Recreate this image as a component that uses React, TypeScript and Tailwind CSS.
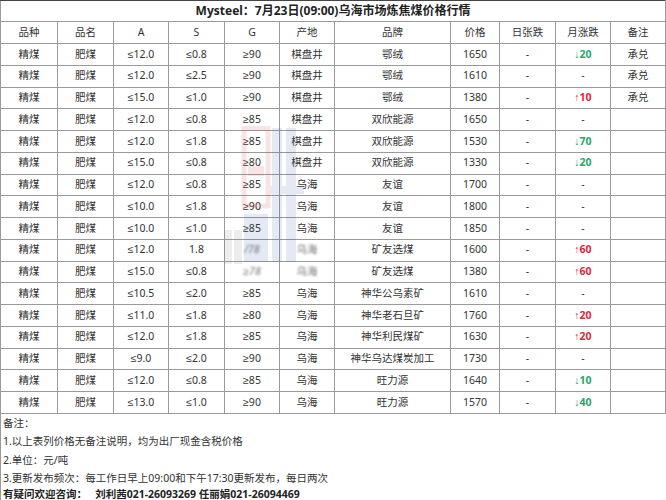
import React from "react";

type Row = {
  a: string;
  s: string;
  g: string;
  origin: string;
  brand: string;
  price: string;
  month: string;
  note?: string;
  blurred?: boolean;
};

const ROWS: Row[] = [
  { a: "≤12.0", s: "≤0.8", g: "≥90", origin: "棋盘井", brand: "鄂绒", price: "1650", month: "↓20", note: "承兑" },
  { a: "≤12.0", s: "≤2.5", g: "≥90", origin: "棋盘井", brand: "鄂绒", price: "1610", month: "-", note: "承兑" },
  { a: "≤15.0", s: "≤1.0", g: "≥90", origin: "棋盘井", brand: "鄂绒", price: "1380", month: "↑10", note: "承兑" },
  { a: "≤12.0", s: "≤0.8", g: "≥85", origin: "棋盘井", brand: "双欣能源", price: "1650", month: "-" },
  { a: "≤12.0", s: "≤1.8", g: "≥85", origin: "棋盘井", brand: "双欣能源", price: "1530", month: "↓70" },
  { a: "≤15.0", s: "≤0.8", g: "≥80", origin: "棋盘井", brand: "双欣能源", price: "1330", month: "↓20" },
  { a: "≤12.0", s: "≤0.8", g: "≥85", origin: "乌海", brand: "友谊", price: "1700", month: "-" },
  { a: "≤10.0", s: "≤1.8", g: "≥90", origin: "乌海", brand: "友谊", price: "1800", month: "-" },
  { a: "≤10.0", s: "≤1.0", g: "≥85", origin: "乌海", brand: "友谊", price: "1850", month: "-" },
  { a: "≤12.0", s: "1.8", g: "/78", origin: "乌海", brand: "矿友选煤", price: "1600", month: "↑60", blurred: true },
  { a: "≤15.0", s: "≤0.8", g: "≥78", origin: "乌海", brand: "矿友选煤", price: "1380", month: "↑60", blurred: true },
  { a: "≤10.5", s: "≤2.0", g: "≥85", origin: "乌海", brand: "神华公乌素矿", price: "1610", month: "-" },
  { a: "≤11.0", s: "≤1.8", g: "≥80", origin: "乌海", brand: "神华老石旦矿", price: "1760", month: "↑20" },
  { a: "≤12.0", s: "≤1.8", g: "≥85", origin: "乌海", brand: "神华利民煤矿", price: "1630", month: "↑20" },
  { a: "≤9.0", s: "≤2.0", g: "≥90", origin: "乌海", brand: "神华乌达煤炭加工", price: "1730", month: "-" },
  { a: "≤12.0", s: "≤0.8", g: "≥85", origin: "乌海", brand: "旺力源", price: "1640", month: "↓10" },
  { a: "≤13.0", s: "≤1.0", g: "≥90", origin: "乌海", brand: "旺力源", price: "1570", month: "↓40" },
];

const HEADERS = ["品种", "品名", "A", "S", "G", "产地", "品牌", "价格", "日张跌", "月涨跌", "备注"];
const WIDTHS = [57, 56, 55, 56, 55, 55, 116, 49, 56, 55, 55];

const cell = "border border-[#9a9a9a] text-center align-middle p-0 whitespace-nowrap";

function MonthChange({ value }: { value: string }) {
  if (value.startsWith("↓")) {
    return (
      <span className="font-bold text-[#25a86e]">
        <span className="font-normal">↓</span>
        {value.slice(1)}
      </span>
    );
  }
  if (value.startsWith("↑")) {
    return (
      <span className="font-bold text-[#e0283c]">
        <span className="font-normal">↑</span>
        {value.slice(1)}
      </span>
    );
  }
  return <span>{value}</span>;
}

// faint brand watermark sitting over the G / 产地 columns
function Watermark() {
  return (
    <div className="pointer-events-none absolute left-[222px] top-[126px] opacity-[0.13]">
      <svg width="90" height="142" viewBox="0 0 90 142">
        <rect x="22" y="2" width="24" height="78" fill="none" stroke="#d9363e" strokeWidth="5" />
        <rect x="26" y="40" width="16" height="10" fill="#d9363e" />
        <rect x="50" y="2" width="10" height="134" fill="#3b5aa8" />
        <rect x="64" y="2" width="10" height="134" fill="#3b5aa8" />
        <rect x="48" y="60" width="34" height="8" fill="#3b5aa8" />
        <rect x="22" y="88" width="24" height="48" fill="#3b5aa8" />
        <rect x="2" y="104" width="8" height="34" fill="#7a7a7a" />
        <rect x="12" y="104" width="8" height="34" fill="#7a7a7a" />
      </svg>
    </div>
  );
}

export default function App() {
  return (
    <div
      className="relative w-[666px] h-[500px] overflow-hidden bg-white text-[#333] text-[10.5px]"
      style={{ fontFamily: '"Noto Sans", "Liberation Sans", "DejaVu Sans", "Noto Sans CJK SC", sans-serif' }}
    >
      <table className="table-fixed border-collapse w-[665px]">
        <colgroup>
          {WIDTHS.map((w, i) => (
            <col key={i} style={{ width: w }} />
          ))}
        </colgroup>
        <thead>
          <tr className="h-[21px]">
            <th
              colSpan={11}
              className="border border-[#9a9a9a] border-t-[#444] text-center align-middle p-0 text-[12px] font-bold text-[#222]"
            >
              Mysteel：7月23日(09:00)乌海市场炼焦煤价格行情
            </th>
          </tr>
          <tr className="h-[22px]">
            {HEADERS.map((h) => (
              <th key={h} className={`${cell} font-normal`}>
                {h}
              </th>
            ))}
          </tr>
        </thead>
        <tbody>
          {ROWS.map((r, i) => (
            <tr key={i} className="h-[21.75px]">
              <td className={cell}>精煤</td>
              <td className={cell}>肥煤</td>
              <td className={cell}>{r.a}</td>
              <td className={cell}>{r.s}</td>
              <td className={cell}>
                {r.blurred ? <span className="blur-[0.8px] text-[#777] italic">{r.g}</span> : r.g}
              </td>
              <td className={cell}>
                {r.blurred ? <span className="blur-[0.8px] text-[#777]">{r.origin}</span> : r.origin}
              </td>
              <td className={cell}>{r.brand}</td>
              <td className={cell}>{r.price}</td>
              <td className={cell}>-</td>
              <td className={cell}>
                <MonthChange value={r.month} />
              </td>
              <td className={cell}>{r.note ?? ""}</td>
            </tr>
          ))}
        </tbody>
      </table>

      <div className="w-[665px] border-l border-[#9a9a9a] pl-[2px] leading-[18.5px]">
        <div>备注：</div>
        <div>1.以上表列价格无备注说明，均为出厂现金含税价格</div>
        <div>2.单位：元/吨</div>
        <div>3.更新发布频次：每工作日早上09:00和下午17:30更新发布，每日两次</div>
        <div className="font-bold text-[#222] leading-[12px]">
          有疑问欢迎咨询：&nbsp;&nbsp;&nbsp;刘利茜021-26093269 任丽娟021-26094469
        </div>
      </div>

      <Watermark />
    </div>
  );
}
